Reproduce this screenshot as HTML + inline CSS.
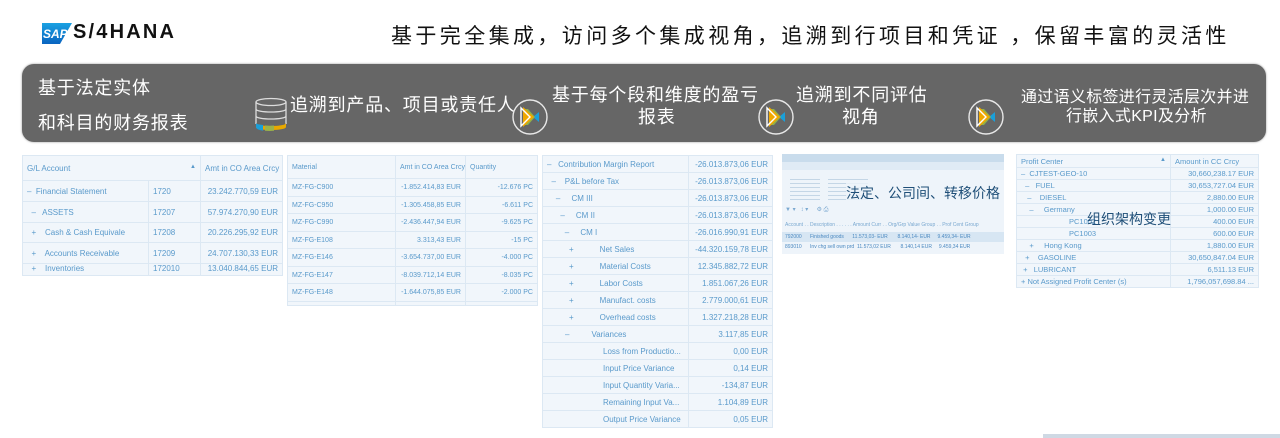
<!DOCTYPE html>
<html><head><meta charset="utf-8">
<style>
*{margin:0;padding:0;box-sizing:border-box}
body{width:1280px;height:438px;background:#fff;position:relative;overflow:hidden;font-family:"Liberation Sans","Noto Sans CJK SC",sans-serif}
.a{position:absolute}
.w{color:#fff;font-size:18px;letter-spacing:0.8px;white-space:nowrap}
table{border-collapse:collapse;position:absolute;font-family:"Liberation Sans",sans-serif;color:#5a9acb;font-size:8.5px;background:#f1f6fb;table-layout:fixed}
td{border:1px solid #dce8f3;padding:0 4px;white-space:nowrap;overflow:hidden}
td.r{text-align:right}
</style></head><body>
<svg class="a" style="left:42px;top:23px" width="30" height="21" viewBox="0 0 30 21"><defs><linearGradient id="g" x1="0" y1="0" x2="0" y2="1"><stop offset="0" stop-color="#1aa1e2"/><stop offset="1" stop-color="#0a64c0"/></linearGradient></defs><polygon points="0,0 30,0 18,21 0,21" fill="url(#g)"/><text x="1" y="15" font-family="Liberation Sans" font-weight="bold" font-size="12" fill="#fff" font-style="italic">SAP</text></svg>
<div class="a" style="left:73px;top:21px;font-weight:bold;font-size:20px;color:#111;letter-spacing:2.2px">S/4HANA</div>
<div class="a" style="left:391px;top:20px;font-size:21px;color:#111;white-space:nowrap;letter-spacing:3.4px">基于完全集成，访问多个集成视角，追溯到行项目和凭证 ，保留丰富的灵活性</div>
<div class="a" style="left:22px;top:64px;width:1244px;height:78px;background:#666;border-radius:12px;box-shadow:0 0 2px #999"></div>
<div class="a w" style="left:38px;top:74px">基于法定实体</div>
<div class="a w" style="left:38px;top:109px">和科目的财务报表</div>
<svg class="a" style="left:254px;top:97px" width="36" height="36" viewBox="0 0 36 36"><g fill="none" stroke="#ddd" stroke-width="1.3"><ellipse cx="17" cy="5" rx="15" ry="3.5"/><path d="M2 5v22M32 5v22M2 12c0 4 30 4 30 0M2 19c0 4 30 4 30 0"/></g><path d="M2 26c0 4 30 4 30 0v4c0 4-30 4-30 0z" fill="#e8a800"/><path d="M2 26v4c0 2 3 3 7 3.6V28c-4-.5-7-1-7-2z" fill="#1a9fd9"/><path d="M11 28.5v5.3c3 .3 6 .3 9 0v-5.3c-3 .3-6 .3-9 0z" fill="#9bb34a"/></svg>
<div class="a w" style="left:290px;top:91px">追溯到产品、项目或责任人</div>
<div class="a w" style="left:552px;top:81px">基于每个段和维度的盈亏</div>
<div class="a w" style="left:638px;top:103px">报表</div>
<div class="a w" style="left:796px;top:81px">追溯到不同评估</div>
<div class="a w" style="left:842px;top:103px">视角</div>
<div class="a w" style="left:1021px;top:83px;font-size:16px;letter-spacing:0.3px">通过语义标签进行灵活层次并进</div>
<div class="a w" style="left:1066px;top:102px;font-size:16px;letter-spacing:0.3px">行嵌入式KPI及分析</div>
<svg width="0" height="0"><defs><g id="pl"><circle cx="18" cy="18" r="17" fill="none" stroke="#e8e8e8" stroke-width="1.4"/><path d="M21 18l6-5v10z" fill="#1a9fd9"/><path d="M18 18l-6-8h4l7 8-7 8h-4z" fill="#8fb04a"/><path d="M11 8v20l11-10z" fill="#f0a800"/><path d="M9 9v18l9-9z" fill="none" stroke="#fff" stroke-width="1.4"/></g></defs></svg>
<svg class="a" style="left:512px;top:99px" width="36" height="36"><use href="#pl"/></svg>
<svg class="a" style="left:758px;top:99px" width="36" height="36"><use href="#pl"/></svg>
<svg class="a" style="left:968px;top:99px" width="36" height="36"><use href="#pl"/></svg>
<table style="left:22px;top:155px;width:260px;font-size:8px">
<colgroup><col style="width:126px"><col style="width:52px"><col style="width:82px"></colgroup>
<tr style="height:25px"><td colspan="2">G/L Account<span style="float:right;font-size:6px">▲</span></td><td>Amt in CO Area Crcy</td></tr>
<tr style="height:21px"><td>–&nbsp; Financial Statement</td><td>1720</td><td class="r">23.242.770,59 EUR</td></tr>
<tr style="height:21px"><td>&nbsp; –&nbsp;&nbsp; ASSETS</td><td>17207</td><td class="r">57.974.270,90 EUR</td></tr>
<tr style="height:20px"><td>&nbsp; +&nbsp;&nbsp;&nbsp; Cash &amp; Cash Equivale</td><td>17208</td><td class="r">20.226.295,92 EUR</td></tr>
<tr style="height:21px"><td>&nbsp; +&nbsp;&nbsp;&nbsp; Accounts Receivable</td><td>17209</td><td class="r">24.707.130,33 EUR</td></tr>
<tr style="height:12px"><td style="vertical-align:top">&nbsp; +&nbsp;&nbsp;&nbsp; Inventories</td><td style="vertical-align:top">172010</td><td class="r" style="vertical-align:top">13.040.844,65 EUR</td></tr>
</table>
<table style="left:287px;top:155px;width:250px;font-size:7px">
<colgroup><col style="width:108px"><col style="width:70px"><col style="width:72px"></colgroup>
<tr style="height:23px"><td>Material</td><td>Amt in CO Area Crcy</td><td>Quantity</td></tr>
<tr style="height:18px"><td>MZ-FG-C900</td><td class="r">-1.852.414,83 EUR</td><td class="r">-12.676 PC</td></tr>
<tr style="height:17px"><td>MZ-FG-C950</td><td class="r">-1.305.458,85 EUR</td><td class="r">-6.611 PC</td></tr>
<tr style="height:18px"><td>MZ-FG-C990</td><td class="r">-2.436.447,94 EUR</td><td class="r">-9.625 PC</td></tr>
<tr style="height:17px"><td>MZ-FG-E108</td><td class="r">3.313,43 EUR</td><td class="r">-15 PC</td></tr>
<tr style="height:18px"><td>MZ-FG-E146</td><td class="r">-3.654.737,00 EUR</td><td class="r">-4.000 PC</td></tr>
<tr style="height:17px"><td>MZ-FG-E147</td><td class="r">-8.039.712,14 EUR</td><td class="r">-8.035 PC</td></tr>
<tr style="height:18px"><td>MZ-FG-E148</td><td class="r">-1.644.075,85 EUR</td><td class="r">-2.000 PC</td></tr>
<tr style="height:4px"><td></td><td></td><td></td></tr>
</table>
<table style="left:542px;top:155px;width:230px;font-size:8px">
<colgroup><col style="width:146px"><col style="width:84px"></colgroup>
<tr style="height:17px"><td>–&nbsp;&nbsp; Contribution Margin Report</td><td class="r">-26.013.873,06 EUR</td></tr>
<tr style="height:17px"><td>&nbsp; –&nbsp;&nbsp;&nbsp; P&amp;L before Tax</td><td class="r">-26.013.873,06 EUR</td></tr>
<tr style="height:17px"><td>&nbsp;&nbsp;&nbsp; –&nbsp;&nbsp;&nbsp;&nbsp; CM III</td><td class="r">-26.013.873,06 EUR</td></tr>
<tr style="height:17px"><td>&nbsp;&nbsp;&nbsp;&nbsp;&nbsp; –&nbsp;&nbsp;&nbsp;&nbsp; CM II</td><td class="r">-26.013.873,06 EUR</td></tr>
<tr style="height:17px"><td>&nbsp;&nbsp;&nbsp;&nbsp;&nbsp;&nbsp;&nbsp; –&nbsp;&nbsp;&nbsp;&nbsp; CM I</td><td class="r">-26.016.990,91 EUR</td></tr>
<tr style="height:17px"><td style="padding-left:26px">+<span style="padding-left:26px">Net Sales</span></td><td class="r">-44.320.159,78 EUR</td></tr>
<tr style="height:17px"><td style="padding-left:26px">+<span style="padding-left:26px">Material Costs</span></td><td class="r">12.345.882,72 EUR</td></tr>
<tr style="height:17px"><td style="padding-left:26px">+<span style="padding-left:26px">Labor Costs</span></td><td class="r">1.851.067,26 EUR</td></tr>
<tr style="height:17px"><td style="padding-left:26px">+<span style="padding-left:26px">Manufact. costs</span></td><td class="r">2.779.000,61 EUR</td></tr>
<tr style="height:17px"><td style="padding-left:26px">+<span style="padding-left:26px">Overhead costs</span></td><td class="r">1.327.218,28 EUR</td></tr>
<tr style="height:17px"><td style="padding-left:22px">–<span style="padding-left:22px">Variances</span></td><td class="r">3.117,85 EUR</td></tr>
<tr style="height:17px"><td style="padding-left:60px">Loss from Productio...</td><td class="r">0,00 EUR</td></tr>
<tr style="height:17px"><td style="padding-left:60px">Input Price Variance</td><td class="r">0,14 EUR</td></tr>
<tr style="height:17px"><td style="padding-left:60px">Input Quantity Varia...</td><td class="r">-134,87 EUR</td></tr>
<tr style="height:17px"><td style="padding-left:60px">Remaining Input Va...</td><td class="r">1.104,89 EUR</td></tr>
<tr style="height:17px"><td style="padding-left:60px">Output Price Variance</td><td class="r">0,05 EUR</td></tr>
</table>
<div class="a" style="left:782px;top:154px;width:222px;height:100px;background:#eef4fa"></div>
<div class="a" style="left:782px;top:154px;width:222px;height:8px;background:#c9dcec"></div>
<div class="a" style="left:782px;top:162px;width:222px;height:8px;background:#e0ebf5"></div>
<div class="a" style="left:790px;top:176px;width:30px;height:26px;background:repeating-linear-gradient(#eef4fa 0 3px,#c4d6e6 3px 4px)"></div>
<div class="a" style="left:828px;top:176px;width:40px;height:26px;background:repeating-linear-gradient(#eef4fa 0 3px,#c4d6e6 3px 4px)"></div>
<div class="a" style="left:785px;top:206px;font-size:6px;color:#7aa8d0;white-space:nowrap">▼ ▾&nbsp;&nbsp; ↕ ▾&nbsp;&nbsp;&nbsp;&nbsp; ⚙ ⎙</div>
<div class="a" style="left:785px;top:222px;font-size:5px;color:#7aa8d0;white-space:nowrap">Account . . Description . . . . . . Amount Curr . . Org/Grp Value Group . . Prof Cent Group</div>
<div class="a" style="left:782px;top:232px;width:222px;height:10px;background:#d7e6f3"></div>
<div class="a" style="left:785px;top:234px;font-size:5px;color:#4a88c0;white-space:nowrap">792000&nbsp;&nbsp;&nbsp;&nbsp;&nbsp; Finished goods&nbsp;&nbsp;&nbsp;&nbsp;&nbsp; 11.573,03- EUR&nbsp;&nbsp;&nbsp;&nbsp;&nbsp;&nbsp; 8.140,14- EUR&nbsp;&nbsp;&nbsp;&nbsp; 9.459,34- EUR</div>
<div class="a" style="left:785px;top:244px;font-size:5px;color:#4a88c0;white-space:nowrap">893010&nbsp;&nbsp;&nbsp;&nbsp;&nbsp; Inv chg sell own prd&nbsp; 11.573,02 EUR&nbsp;&nbsp;&nbsp;&nbsp;&nbsp;&nbsp; 8.140,14 EUR&nbsp;&nbsp;&nbsp;&nbsp; 9.459,34 EUR</div>
<div class="a" style="left:846px;top:183px;font-size:14px;color:#1f4f78;white-space:nowrap;background:rgba(238,244,250,.8)">法定、公司间、转移价格</div>
<table style="left:1016px;top:154px;width:242px;font-size:7.5px">
<colgroup><col style="width:154px"><col style="width:88px"></colgroup>
<tr style="height:13px"><td>Profit Center<span style="float:right;font-size:6px">▲</span></td><td>Amount in CC Crcy</td></tr>
<tr style="height:12px"><td>–&nbsp; CJTEST-GEO-10</td><td class="r">30,660,238.17 EUR</td></tr>
<tr style="height:12px"><td>&nbsp; –&nbsp;&nbsp; FUEL</td><td class="r">30,653,727.04 EUR</td></tr>
<tr style="height:12px"><td>&nbsp;&nbsp; –&nbsp;&nbsp;&nbsp; DIESEL</td><td class="r">2,880.00 EUR</td></tr>
<tr style="height:12px"><td>&nbsp;&nbsp;&nbsp; –&nbsp;&nbsp;&nbsp;&nbsp; Germany</td><td class="r">1,000.00 EUR</td></tr>
<tr style="height:12px"><td style="padding-left:52px">PC1002</td><td class="r">400.00 EUR</td></tr>
<tr style="height:12px"><td style="padding-left:52px">PC1003</td><td class="r">600.00 EUR</td></tr>
<tr style="height:12px"><td>&nbsp;&nbsp;&nbsp; +&nbsp;&nbsp;&nbsp;&nbsp; Hong Kong</td><td class="r">1,880.00 EUR</td></tr>
<tr style="height:12px"><td>&nbsp; +&nbsp;&nbsp;&nbsp; GASOLINE</td><td class="r">30,650,847.04 EUR</td></tr>
<tr style="height:12px"><td>&nbsp;+&nbsp;&nbsp; LUBRICANT</td><td class="r">6,511.13 EUR</td></tr>
<tr style="height:12px"><td>+ Not Assigned Profit Center (s)</td><td class="r">1,796,057,698.84 ...</td></tr>
</table>
<div class="a" style="left:1087px;top:209px;font-size:14px;color:#1f4f78;white-space:nowrap">组织架构变更</div>
<div class="a" style="left:1043px;top:434px;width:237px;height:4px;background:#cfd9e4"></div>
</body></html>
